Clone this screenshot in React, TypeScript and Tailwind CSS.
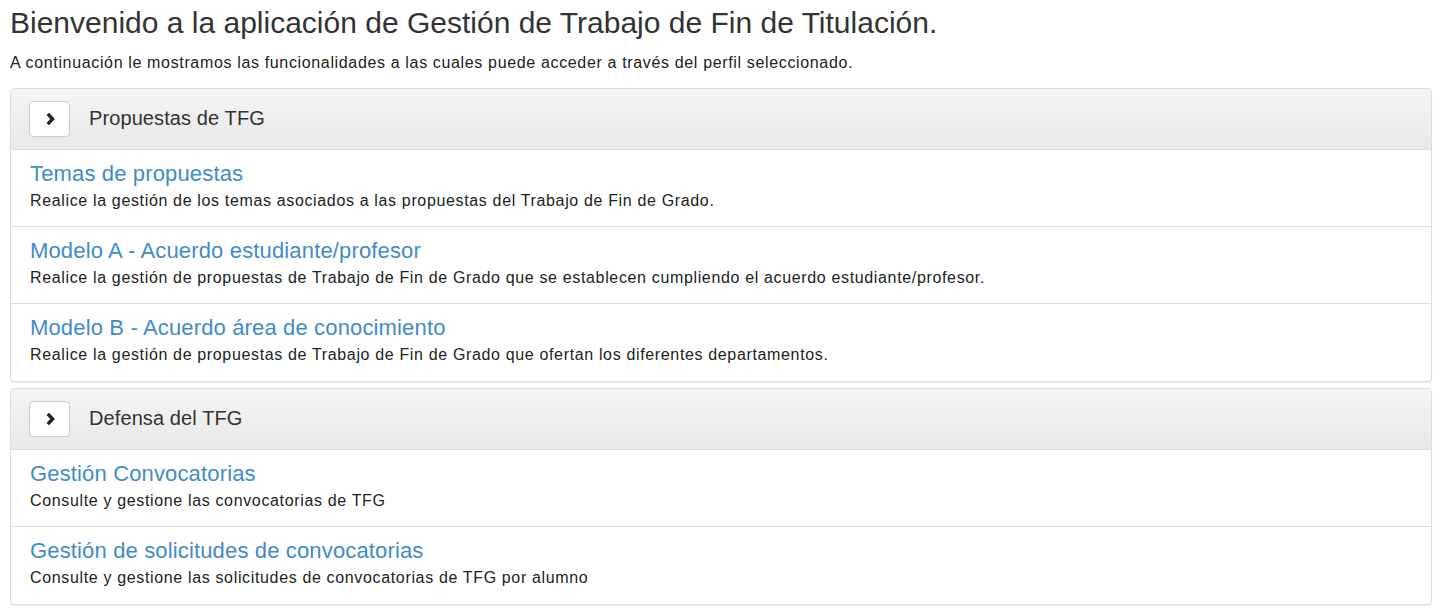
import React from "react";

type Item = { title: string; desc: string };

const sections: { title: string; items: Item[] }[] = [
  {
    title: "Propuestas de TFG",
    items: [
      {
        title: "Temas de propuestas",
        desc: "Realice la gestión de los temas asociados a las propuestas del Trabajo de Fin de Grado.",
      },
      {
        title: "Modelo A - Acuerdo estudiante/profesor",
        desc: "Realice la gestión de propuestas de Trabajo de Fin de Grado que se establecen cumpliendo el acuerdo estudiante/profesor.",
      },
      {
        title: "Modelo B - Acuerdo área de conocimiento",
        desc: "Realice la gestión de propuestas de Trabajo de Fin de Grado que ofertan los diferentes departamentos.",
      },
    ],
  },
  {
    title: "Defensa del TFG",
    items: [
      {
        title: "Gestión Convocatorias",
        desc: "Consulte y gestione las convocatorias de TFG",
      },
      {
        title: "Gestión de solicitudes de convocatorias",
        desc: "Consulte y gestione las solicitudes de convocatorias de TFG por alumno",
      },
    ],
  },
];

function Chevron() {
  return (
    <svg width="11" height="14" viewBox="0 0 11 14" className="ml-[2px] block">
      <path d="M2.8 1.8 L7.6 7 L2.8 12.2" fill="none" stroke="#222" strokeWidth="3.4" strokeLinejoin="miter" />
    </svg>
  );
}

function Panel({ title, items }: { title: string; items: Item[] }) {
  return (
    <div className="rounded-[4px] border border-[#dddddd] bg-white shadow-[0_1px_1px_rgba(0,0,0,0.08)]">
      <div className="flex h-[61px] items-center gap-[19px] rounded-t-[3px] border-b border-[#dddddd] bg-gradient-to-b from-[#f5f5f5] to-[#e8e8e8] pl-[18px]">
        <div className="flex h-[36px] w-[41px] items-center justify-center rounded-[4px] border border-[#cccccc] bg-white">
          <Chevron />
        </div>
        <div className="pb-[3px] text-[20px] tracking-[0.1px] text-[#333333]">{title}</div>
      </div>
      {items.map((it, i) => (
        <div
          key={i}
          className={
            "h-[77px] px-[19px] pt-[10px] " + (i < items.length - 1 ? "border-b border-[#dddddd]" : "")
          }
        >
          <div className="text-[22px] leading-[28px] tracking-[0.15px] text-[#428bca]">{it.title}</div>
          <div className="mt-[2px] text-[16px] leading-[22px] tracking-[0.65px] text-[#222222]">{it.desc}</div>
        </div>
      ))}
    </div>
  );
}

export default function App() {
  return (
    <div className="min-h-[610px] bg-white px-[10px] font-['Liberation_Sans',Arial,sans-serif] text-[#333333]">
      <h1 className="pt-[4px] text-[30px] leading-[38px] text-[#333333]">
        Bienvenido a la aplicación de Gestión de Trabajo de Fin de Titulación.
      </h1>
      <p className="mt-[10px] text-[16px] leading-[22px] tracking-[0.65px] text-[#222222]">
        A continuación le mostramos las funcionalidades a las cuales puede acceder a través del perfil seleccionado.
      </p>
      <div className="mt-[14px] flex flex-col gap-[6px]">
        {sections.map((s, i) => (
          <Panel key={i} title={s.title} items={s.items} />
        ))}
      </div>
    </div>
  );
}
